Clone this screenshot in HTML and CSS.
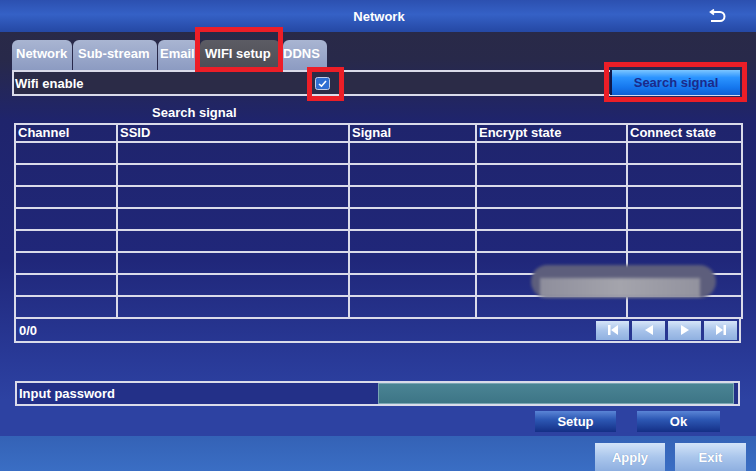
FILE: index.html
```html
<!DOCTYPE html>
<html lang="en">
<head>
    <meta charset="UTF-8">
    <meta name="viewport" content="width=device-width, initial-scale=1.0">
    <title>Network - WIFI setup</title>
    <link rel="stylesheet" href="styles.css">
</head>
<body>
    <div class="screen">
        <header class="titlebar">
            <span class="title">Network</span>
            <svg class="back" width="20" height="14" viewBox="0 0 20 14">
                <path d="M3 3 H12 A4.5 4.5 0 0 1 12 12 H3" fill="none" stroke="#fff" stroke-width="2"/>
                <path d="M6 0.5 L2.5 3 L6 5.5" fill="none" stroke="#fff" stroke-width="1.6"/>
            </svg>
        </header>

        <div class="panel">
            <nav class="tabs">
                <span class="tab">Network</span>
                <span class="tab">Sub-stream</span>
                <span class="tab">Email</span>
                <span class="tab is-active marked">WIFI setup</span>
                <span class="tab">DDNS</span>
            </nav>

            <div class="wifi-row">
                <span class="wifi-label">Wifi enable</span>
                <span class="check marked">
                    <svg width="15" height="13" viewBox="0 0 15 13">
                        <rect x="0.5" y="0.5" width="14" height="12" rx="2" fill="#2f6ed2" stroke="#c3cde6"/>
                        <path d="M4 7 L6.5 9.2 L11 4" fill="none" stroke="#fff" stroke-width="1.6"/>
                    </svg>
                </span>
                <span class="spacer"></span>
                <button class="search-btn marked">Search signal</button>
            </div>

            <div class="caption">Search signal</div>

            <div class="list">
                <table class="signal-table">
                    <colgroup>
                        <col class="c-channel">
                        <col class="c-ssid">
                        <col class="c-signal">
                        <col class="c-encrypt">
                        <col class="c-connect">
                    </colgroup>
                    <thead>
                        <tr><th>Channel</th><th>SSID</th><th>Signal</th><th>Encrypt state</th><th>Connect state</th></tr>
                    </thead>
                    <tbody>
                        <tr><td></td><td></td><td></td><td></td><td></td></tr>
                        <tr><td></td><td></td><td></td><td></td><td></td></tr>
                        <tr><td></td><td></td><td></td><td></td><td></td></tr>
                        <tr><td></td><td></td><td></td><td></td><td></td></tr>
                        <tr><td></td><td></td><td></td><td></td><td></td></tr>
                        <tr><td></td><td></td><td></td><td></td><td></td></tr>
                        <tr><td></td><td></td><td></td><td></td><td></td></tr>
                        <tr><td></td><td></td><td></td><td></td><td></td></tr>
                    </tbody>
                </table>
                <div class="list-foot">
                    <span class="count">0/0</span>
                    <div class="pager">
                        <button class="page-btn">
                            <svg width="14" height="12" viewBox="0 0 14 12"><rect x="2" y="1" width="2.5" height="10" fill="#fff"/><path d="M12 1 L5 6 L12 11 Z" fill="#fff"/></svg>
                        </button>
                        <button class="page-btn">
                            <svg width="14" height="12" viewBox="0 0 14 12"><path d="M11 1 L3 6 L11 11 Z" fill="#fff"/></svg>
                        </button>
                        <button class="page-btn">
                            <svg width="14" height="12" viewBox="0 0 14 12"><path d="M3 1 L11 6 L3 11 Z" fill="#fff"/></svg>
                        </button>
                        <button class="page-btn">
                            <svg width="14" height="12" viewBox="0 0 14 12"><path d="M2 1 L9 6 L2 11 Z" fill="#fff"/><rect x="9.5" y="1" width="2.5" height="10" fill="#fff"/></svg>
                        </button>
                    </div>
                </div>
                <!-- blurred spot in the photo -->
                <div class="smudge"><span></span></div>
            </div>

            <div class="pass-row">
                <span class="pass-label">Input password</span>
                <span class="pass-field"></span>
            </div>

            <div class="actions">
                <button class="dark-btn setup">Setup</button>
                <button class="dark-btn ok">Ok</button>
            </div>
        </div>

        <footer class="bottombar">
            <button class="light-btn apply">Apply</button>
            <button class="light-btn exit">Exit</button>
        </footer>
    </div>
</body>
</html>
```

FILE: styles.css
```css
:root {
    --line: #dadbea;
    --red: #ec1e27;
    --white: #ffffff;
    --navy-text: #1b2a8a;
}

* {
    box-sizing: border-box;
}

body {
    margin: 0;
    font-family: 'Liberation Sans', Arial, sans-serif;
    font-size: 13px;
    font-weight: bold;
    color: var(--white);
    background: #1f2570;
}

button {
    font: inherit;
    border: none;
    padding: 0;
    cursor: pointer;
}

.screen {
    width: 756px;
    height: 471px;
    overflow: hidden;
    display: flex;
    flex-direction: column;
    background: linear-gradient(180deg, #2a2a45 0px, #28294a 60px, #1f246c 120px, #20277a 260px, #293a98 360px, #2d42a2 400px);
}

/* title bar */
.titlebar {
    flex: none;
    height: 32px;
    display: grid;
    grid-template-columns: 1fr auto 1fr;
    align-items: center;
    background: linear-gradient(180deg, #2c50b0 0%, #3561c6 45%, #2548a4 100%);
}

.titlebar .title {
    grid-column: 2;
    padding-left: 2px;
}

.titlebar .back {
    grid-column: 3;
    justify-self: end;
    margin-right: 28px;
}

.panel {
    flex: 1;
    padding: 8px 15px 0 13px;
}

/* tabs */
.tabs {
    display: flex;
    height: 30px;
    margin-left: -1px;
}

.tab {
    height: 30px;
    line-height: 27px;
    padding-left: 4px;
    margin-right: 1px;
    white-space: nowrap;
    overflow: hidden;
    border-radius: 6px 6px 0 0;
    background: linear-gradient(180deg, #a9b5d2 0%, #8c9bc2 100%);
}

.tab:nth-child(1) { width: 60px; }
.tab:nth-child(2) { width: 84px; padding-left: 5px; }
.tab:nth-child(3) { width: 41px; padding-left: 2px; }
.tab:nth-child(4) { width: 80px; padding-left: 5px; margin-right: 3px; }
.tab:nth-child(5) { width: 44px; padding-left: 0; }

.tab.is-active {
    overflow: visible;
    background: linear-gradient(180deg, #5c5c64 0%, #4c4c55 100%);
}

/* red annotation frames */
.marked {
    position: relative;
}

.marked::after {
    content: "";
    position: absolute;
    border: 5px solid var(--red);
    pointer-events: none;
}

.tab.marked::after { top: -13px; left: -5px; right: -3px; bottom: -2px; }
.check.marked::after { top: -10px; left: -8px; right: -14px; bottom: -11px; }
.search-btn.marked::after { top: -8px; left: -8px; right: -7px; bottom: -7px; }

/* wifi enable row */
.wifi-row {
    display: flex;
    align-items: center;
    height: 26px;
    margin: 0 1px 0 -1px;
    border: 2px solid var(--line);
    border-right: none;
    background: #2b2b47;
}

.wifi-label {
    width: 301px;
    padding-left: 1px;
}

.check {
    display: flex;
    width: 15px;
    height: 13px;
}

.spacer {
    flex: 1;
}

.search-btn {
    align-self: stretch;
    width: 130px;
    margin: -2px 0 -1px;
    color: var(--navy-text);
    border-left: 2px solid #10184a;
    background: linear-gradient(180deg, #7cc6ff 0%, #2b94ff 30%, #1577ee 70%, #0f5fd4 100%);
}

.caption {
    height: 27px;
    padding: 9px 0 0 139px;
    line-height: 16px;
}

/* search result list */
.list {
    position: relative;
    width: 727px;
    margin-left: 1px;
}

.signal-table {
    width: 727px;
    table-layout: fixed;
    border-collapse: collapse;
    border: 2px solid var(--line);
}

.c-channel { width: 102px; }
.c-ssid { width: 232px; }
.c-signal { width: 127px; }
.c-encrypt { width: 151px; }
.c-connect { width: 115px; }

.signal-table th,
.signal-table td {
    border: 2px solid var(--line);
    padding: 0 2px;
    text-align: left;
    font-weight: bold;
}

.signal-table th {
    height: 18px;
    line-height: 14px;
}

.signal-table td {
    height: 22px;
}

.list-foot {
    height: 24px;
    display: flex;
    align-items: center;
    justify-content: space-between;
    padding: 0 2px 0 3px;
    border: 2px solid var(--line);
    border-top: none;
}

.pager {
    display: flex;
    gap: 3px;
}

.page-btn {
    width: 33px;
    height: 19px;
    display: flex;
    align-items: center;
    justify-content: center;
    background: linear-gradient(180deg, #d6e5f8 0%, #a8c3ea 50%, #8fb0e0 100%);
}

.smudge {
    position: absolute;
    left: 517px;
    top: 142px;
    width: 185px;
    height: 33px;
    border-radius: 17px;
    background: #5d5e7c;
    filter: blur(1.5px);
}

.smudge span {
    position: absolute;
    left: 9px;
    right: 16px;
    top: 13px;
    bottom: 1px;
    background: linear-gradient(90deg, #8e8e9c, #a4a4ac 50%, #92929e);
}

/* password row */
.pass-row {
    display: flex;
    align-items: center;
    height: 25px;
    margin: 38px 1px 0 2px;
    border: 2px solid var(--line);
    background: #233088;
}

.pass-label {
    flex: 1;
    padding-left: 2px;
}

.pass-field {
    width: 356px;
    height: 21px;
    margin-right: 4px;
    border: 1px solid #7aa6b4;
    background: linear-gradient(180deg, #4a8494 0%, #3d7586 100%);
}

.actions {
    display: flex;
    justify-content: flex-end;
    gap: 21px;
    height: 21px;
    margin-top: 5px;
    padding-right: 21px;
}

.dark-btn {
    height: 21px;
    color: var(--white);
    background: linear-gradient(180deg, #5a85d6 0%, #2d58b4 40%, #142f86 100%);
}

.dark-btn.setup { width: 81px; }
.dark-btn.ok { width: 83px; }

/* bottom bar */
.bottombar {
    flex: none;
    height: 35px;
    display: flex;
    justify-content: flex-end;
    align-items: flex-end;
    gap: 10px;
    padding-right: 10px;
    background: linear-gradient(180deg, #3462b6 0%, #3a6ec4 100%);
}

.light-btn {
    height: 28px;
    color: var(--white);
    text-shadow: 0 0 1px #6f8fc0;
    background: linear-gradient(180deg, #d3e4f8 0%, #aac6ec 50%, #8eafe0 100%);
}

.light-btn.apply { width: 70px; }
.light-btn.exit { width: 71px; }
```
